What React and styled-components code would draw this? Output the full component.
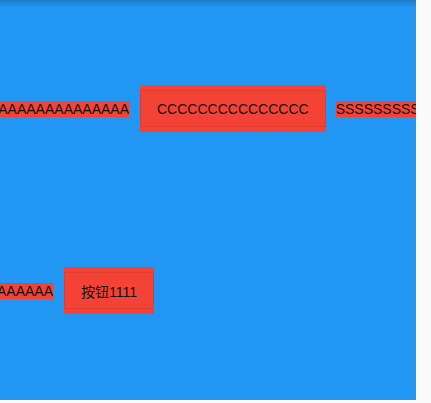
import React from "react";
import styled, { createGlobalStyle } from "styled-components";

const Global = createGlobalStyle`
  html, body { margin: 0; padding: 0; background: #fafafa; }
  body { font-family: "Liberation Sans", "Noto Sans CJK SC", sans-serif; }
`;

const Panel = styled.div`
  width: 416px;
  height: 400px;
  background: linear-gradient(to bottom, rgba(0,0,0,0.18) 0px, rgba(0,0,0,0.06) 5px, rgba(0,0,0,0) 7px), #2196f3;
  overflow: hidden;
  display: flex;
  flex-direction: column;
`;

const Row = styled.div`
  display: flex;
  align-items: center;
  margin-top: ${(p) => p.$top}px;
  height: 47px;
  white-space: nowrap;
`;

const Clip = styled.div`
  width: ${(p) => p.$w}px;
  flex-shrink: 0;
  display: flex;
  justify-content: flex-end;
  overflow: hidden;
`;

const Label = styled.span`
  flex-shrink: 0;
  background: #f44336;
  color: #111;
  font-size: 14px;
  line-height: 16px;
`;

const Button = styled.div`
  flex-shrink: 0;
  margin-left: ${(p) => p.$gap}px;
  margin-right: 10px;
  background: #f44336;
  padding: 5px 0;
  min-width: 88px;
`;

const Face = styled.div`
  height: 37px;
  box-sizing: border-box;
  border: 1px solid rgba(120, 0, 0, 0.12);
  display: flex;
  align-items: center;
  justify-content: center;
  padding: 0 16px;
  color: #111;
  font-size: 14px;
`;

export default function App() {
  return (
    <>
      <Global />
      <Panel>
        <Row $top={85}>
          <Clip $w={129}>
            <Label>AAAAAAAAAAAAAAAA</Label>
          </Clip>
          <Button $gap={11}>
            <Face>CCCCCCCCCCCCCCC</Face>
          </Button>
          <Label>SSSSSSSSSSSS</Label>
        </Row>
        <Row $top={135}>
          <Clip $w={53}>
            <Label>AAAAAAAAAA</Label>
          </Clip>
          <Button $gap={11}>
            <Face>按钮1111</Face>
          </Button>
        </Row>
      </Panel>
    </>
  );
}
